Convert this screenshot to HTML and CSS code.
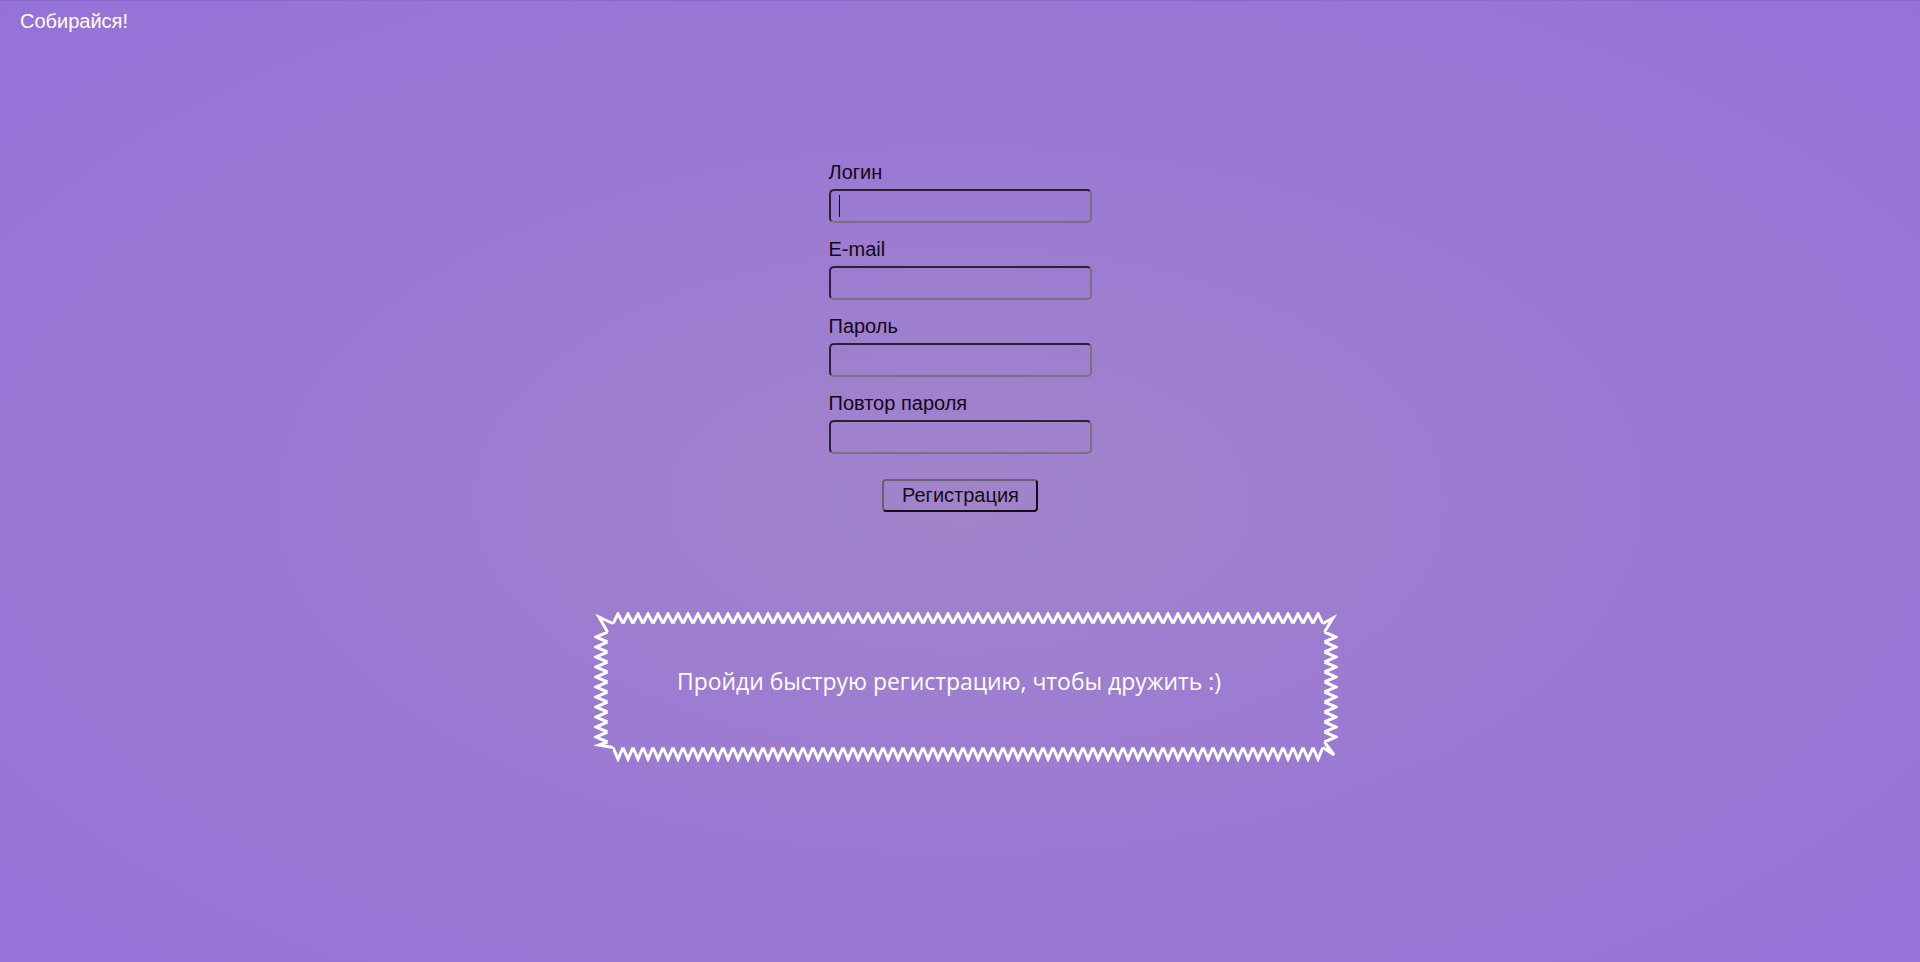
FILE: index.html
```html
<!DOCTYPE html>
<html lang="ru">
<head>
<meta charset="utf-8">
<title>Собирайся!</title>
<link rel="stylesheet" href="styles.css">
</head>
<body>
<header class="header">Собирайся!</header>
<main class="main">
  <form class="form">
    <label class="field field-focused">
      <span class="label">Логин</span>
      <input class="input" type="text">
    </label>
    <label class="field">
      <span class="label">E-mail</span>
      <input class="input" type="email">
    </label>
    <label class="field">
      <span class="label">Пароль</span>
      <input class="input" type="password">
    </label>
    <label class="field">
      <span class="label">Повтор пароля</span>
      <input class="input" type="password">
    </label>
    <div class="actions">
      <button class="button" type="button">Регистрация</button>
    </div>
  </form>
  <section class="promo">
    <svg class="promo-frame" width="744" height="150" viewBox="0 0 744 150" aria-hidden="true">
      <defs>
        <pattern id="zt" patternUnits="userSpaceOnUse" x="19" y="0" width="10" height="14">
          <polyline points="0,11.5 5,1.8 10,11.5" fill="none" stroke="#fff" stroke-width="3"/>
        </pattern>
        <pattern id="zb" patternUnits="userSpaceOnUse" x="19" y="134" width="10" height="16">
          <polyline points="0,1.5 5,13.2 10,1.5" fill="none" stroke="#fff" stroke-width="3"/>
        </pattern>
        <pattern id="zl" patternUnits="userSpaceOnUse" x="0" y="20" width="16" height="10">
          <polyline points="13.5,0 1.8,5 13.5,10" fill="none" stroke="#fff" stroke-width="3"/>
        </pattern>
        <pattern id="zr" patternUnits="userSpaceOnUse" x="728" y="20" width="16" height="10">
          <polyline points="2.5,0 14.2,5 2.5,10" fill="none" stroke="#fff" stroke-width="3"/>
        </pattern>
      </defs>
      <rect x="19" y="0" width="710" height="14" fill="url(#zt)"/>
      <rect x="19" y="134" width="710" height="16" fill="url(#zb)"/>
      <rect x="0" y="20" width="16" height="110" fill="url(#zl)"/>
      <rect x="728" y="20" width="16" height="110" fill="url(#zr)"/>
      <g fill="none" stroke="#fff" stroke-width="3" stroke-linejoin="miter">
        <polyline points="19,11.5 5,5 13.5,20"/>
        <polyline points="729,11.5 739,6 730.5,20"/>
        <polyline points="13.5,130 5,133 19,135.5"/>
        <polyline points="730.5,130 740,143 729,135.5"/>
      </g>
    </svg>
    <p class="promo-text">Пройди быструю регистрацию, чтобы дружить :)</p>
  </section>
</main>
</body>
</html>
```

FILE: styles.css
```css
html, body {
  margin: 0;
  padding: 0;
}

body {
  min-height: 962px;
  background: radial-gradient(ellipse at 50% 52%, #a184cb 0%, #9b7ad2 45%, #9572d8 100%);
  border-top: 1px solid #8c68cf;
  box-sizing: border-box;
  font-family: "Liberation Sans", Arial, sans-serif;
  font-size: 20px;
  color: #120818;
}

.header {
  padding: 9px 20px 0;
  line-height: 23px;
  color: #ffffff;
}

.main {
  display: flex;
  flex-direction: column;
  align-items: center;
}

.form {
  width: 263px;
  margin-top: 128px;
  display: flex;
  flex-direction: column;
}

.field {
  display: flex;
  flex-direction: column;
  gap: 5px;
  margin-bottom: 15px;
}

.field-focused {
  position: relative;
}

.field-focused::after {
  content: "";
  position: absolute;
  left: 10px;
  bottom: 6px;
  width: 1px;
  height: 22px;
  background: #000;
}

.label {
  line-height: 23px;
}

.input {
  box-sizing: border-box;
  width: 263px;
  height: 34px;
  margin: 0;
  padding: 0 6px;
  background: transparent;
  border: 2px solid;
  border-color: #2a2232 #7a7080 #7a7080 #2a2232;
  border-radius: 5px;
  font-family: "Liberation Sans", Arial, sans-serif;
  font-size: 18px;
  color: #111;
  outline: none;
}

.actions {
  display: flex;
  justify-content: center;
  padding-top: 10px;
}

.button {
  box-sizing: border-box;
  width: 156px;
  height: 33px;
  padding: 0 18px;
  background: transparent;
  border: 2px solid;
  border-color: #6a6070 #111014 #111014 #6a6070;
  border-radius: 4px;
  font-family: "Liberation Sans", Arial, sans-serif;
  font-size: 20px;
  color: #111;
  cursor: pointer;
}

.promo {
  position: relative;
  width: 744px;
  height: 150px;
  margin: 100px 0 0 12px;
  box-sizing: border-box;
  padding: 54px 0 0 83px;
}

.promo-frame {
  position: absolute;
  left: 0;
  top: 0;
}

.promo-text {
  margin: 0;
  font-family: "Open Sans", "Noto Sans", sans-serif;
  font-size: 22.9px;
  line-height: 31px;
  color: #ffffff;
  white-space: nowrap;
}
```
